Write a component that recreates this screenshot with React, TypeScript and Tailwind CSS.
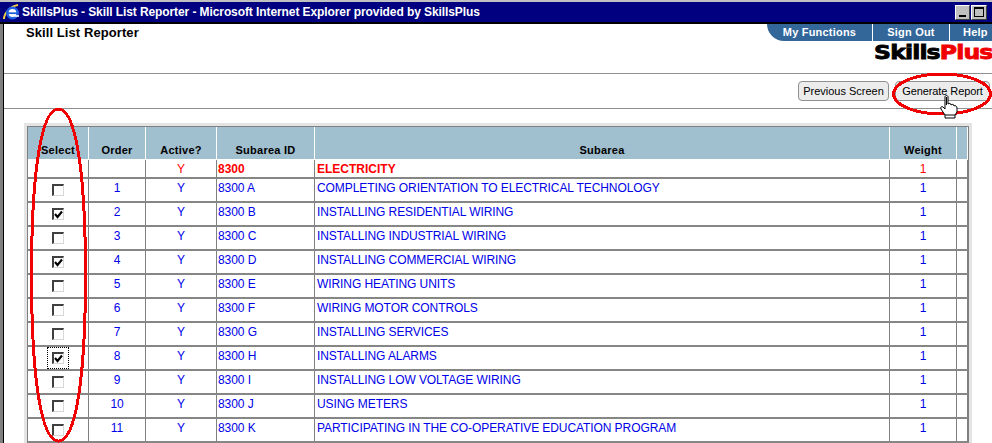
import { Fragment } from 'react';

const rows = [
  { order: '1', id: '8300 A', name: 'COMPLETING ORIENTATION TO ELECTRICAL TECHNOLOGY', checked: false },
  { order: '2', id: '8300 B', name: 'INSTALLING RESIDENTIAL WIRING', checked: true },
  { order: '3', id: '8300 C', name: 'INSTALLING INDUSTRIAL WIRING', checked: false },
  { order: '4', id: '8300 D', name: 'INSTALLING COMMERCIAL WIRING', checked: true },
  { order: '5', id: '8300 E', name: 'WIRING HEATING UNITS', checked: false },
  { order: '6', id: '8300 F', name: 'WIRING MOTOR CONTROLS', checked: false },
  { order: '7', id: '8300 G', name: 'INSTALLING SERVICES', checked: false },
  { order: '8', id: '8300 H', name: 'INSTALLING ALARMS', checked: true, focused: true },
  { order: '9', id: '8300 I', name: 'INSTALLING LOW VOLTAGE WIRING', checked: false },
  { order: '10', id: '8300 J', name: 'USING METERS', checked: false },
  { order: '11', id: '8300 K', name: 'PARTICIPATING IN THE CO-OPERATIVE EDUCATION PROGRAM', checked: false },
];

const gridCols = 'grid grid-cols-[61px_57px_71px_98px_575px_67px_11px]';
const cell = 'border-r border-[#808080] text-center';

function Checkbox({ checked, focused }: { checked: boolean; focused?: boolean }) {
  return (
    <div className={`flex h-[22px] w-[22px] items-center justify-center ${focused ? 'border border-dotted border-black' : ''}`}>
      <div className="h-[12px] w-[12px] border-t-2 border-l-2 border-r border-b border-t-[#404040] border-l-[#404040] border-r-[#d8d8d8] border-b-[#d8d8d8] bg-white">
        {checked && (
          <svg width="9" height="9" viewBox="0 0 9 9" className="block">
            <path d="M1 4 L3.5 7 L8 1.5" fill="none" stroke="#000" strokeWidth="2.1" />
          </svg>
        )}
      </div>
    </div>
  );
}

function IeIcon() {
  return (
    <svg width="17" height="17" viewBox="0 0 17 17" className="shrink-0">
      <path d="M1 15 C1 9 8 2 15 1" fill="none" stroke="#f0d040" strokeWidth="2" />
      <circle cx="9.5" cy="9" r="5.2" fill="#fff" stroke="#2060e0" strokeWidth="2.6" />
      <path d="M5 9.2 H15" stroke="#2060e0" strokeWidth="1.8" />
      <path d="M11.5 12 H16" stroke="#fff" strokeWidth="1.6" />
    </svg>
  );
}

function TitleBar() {
  return (
    <div className="flex h-[24px] flex-col bg-[#c0c0c0] pt-[2px]">
      <div className="flex h-[20px] items-center bg-[#000080] pl-[3px] pr-[3px]">
        <IeIcon />
        <span className="ml-[2px] text-[12px] font-bold tracking-[-0.09px] text-white">
          SkillsPlus - Skill List Reporter - Microsoft Internet Explorer provided by SkillsPlus
        </span>
        <div className="ml-auto flex gap-[1px] pr-[2px]">
          <div className="flex h-[15px] w-[15px] items-end justify-center border border-t-white border-l-white border-r-[#404040] border-b-[#404040] bg-[#c0c0c0] pb-[2px]">
            <div className="h-[2px] w-[7px] bg-black" />
          </div>
          <div className="flex h-[15px] w-[16px] items-center justify-center border border-t-white border-l-white border-r-[#404040] border-b-[#404040] bg-[#c0c0c0]">
            <div className="h-[10px] w-[10px] border border-t-2 border-black" />
          </div>
        </div>
      </div>
      <div className="h-[2px] bg-black" />
    </div>
  );
}

function TopNav() {
  return (
    <div className="flex flex-col items-end">
      <div className="flex h-[17px] items-center rounded-bl-[18px] bg-[#336699] text-[11px] font-bold tracking-[0.2px] text-white">
        <div className="w-[105px] text-center">My Functions</div>
        <div className="w-[77px] border-l border-white text-center">Sign Out</div>
        <div className="w-[43px] border-l border-white pl-[13px]">Help</div>
      </div>
      <div className="mt-[1px] origin-right scale-x-[1.24] font-['DejaVu_Sans',sans-serif] text-[19px] leading-[20px] font-bold tracking-[-0.7px] whitespace-nowrap [-webkit-text-stroke:0.8px]">
        <span className="text-black">Skills</span>
        <span className="text-[#f00000]">Plus</span>
      </div>
    </div>
  );
}

function ReportTable() {
  return (
    <div className="ml-[20px] mt-[14px] w-[948px] shrink-0 border-[3px] border-[#e4e4e4] bg-[#808080] pl-[1px] pr-[1px] pt-[1px]">
      <div className={`${gridCols} h-[32px] bg-[#a0bfcf] text-[11px] font-bold tracking-[0.25px] text-black`}>
        {['Select', 'Order', 'Active?', 'Subarea ID', 'Subarea', 'Weight', ''].map((label) => (
          <div key={label} className="border-r border-b border-white pt-[15px] text-center">
            {label}
          </div>
        ))}
      </div>
      <div className={`${gridCols} h-[20px] border-b-2 border-[#868686] bg-white pt-[1px] text-[12px] text-[#ff0000]`}>
        <div className={cell} />
        <div className={cell} />
        <div className={cell}>Y</div>
        <div className="border-r border-[#808080] pl-[1px] font-bold">8300</div>
        <div className="border-r border-[#808080] pl-[2px] font-bold">ELECTRICITY</div>
        <div className={cell}>1</div>
        <div className={cell} />
      </div>
      {rows.map((row) => (
        <Fragment key={row.id}>
          <div className={`${gridCols} h-[24px] border-b-2 border-[#868686] bg-white text-[12px] tracking-[-0.08px] text-[#0000e8]`}>
            <div className="flex items-center justify-center border-r border-[#808080]">
              <Checkbox checked={row.checked} focused={row.focused} />
            </div>
            <div className={cell}>{row.order}</div>
            <div className={cell}>Y</div>
            <div className="border-r border-[#808080] pl-[1px]">{row.id}</div>
            <div className="border-r border-[#808080] pl-[2px]">{row.name}</div>
            <div className={cell}>1</div>
            <div className={cell} />
          </div>
        </Fragment>
      ))}
    </div>
  );
}

function Annotations() {
  return (
    <svg width="992" height="443" viewBox="0 0 992 443" className="pointer-events-none absolute left-0 top-0">
      <path
        d="M58.5 109 C75.5 109 85.5 170 85.5 275 C85.5 380 75.5 441 58.5 441 C41.5 441 31.5 380 31.5 275 C31.5 170 41.5 109 58.5 109 Z"
        fill="none"
        stroke="#f00000"
        strokeWidth="3"
        shapeRendering="crispEdges"
      />
      <ellipse cx="942" cy="94" rx="48.5" ry="20" fill="none" stroke="#f00000" strokeWidth="3" shapeRendering="crispEdges" />
      <path
        d="M945 97 C945 95 948 95 948 97 L948 104 C949 103 951 103 951 105 C952 104 954 104 954 106 C955 105 957 106 957 108 L957 112 L955 115 L955 118 L945 118 L945 115 L941 109 C940 107 942 106 943 107 L945 109 Z"
        fill="#fff"
        stroke="#000"
        strokeWidth="1"
      />
      <path d="M945 115 H955 M946.5 97 V105" stroke="#000" strokeWidth="1" />
    </svg>
  );
}

export default function App() {
  return (
    <div className="relative h-[443px] w-[992px] overflow-hidden bg-white font-['Liberation_Sans',Arial,sans-serif]">
      <TitleBar />
      <div className="flex h-[419px] border-l-[3px] border-[#808080]">
        <div className="w-[1px] bg-black" />
        <div className="flex min-w-0 flex-1 flex-col">
          <div className="flex h-[50px] shrink-0 justify-between border-b border-[#909090]">
            <div className="pl-[22px] text-[13px] leading-[18px] font-bold tracking-[0.08px] text-black">Skill List Reporter</div>
            <TopNav />
          </div>
          <div className="flex h-[35px] shrink-0 items-center justify-end gap-[6px] border-b border-[#909090] pr-[2px] text-[11px] text-black">
            <div className="flex h-[20px] w-[91px] items-center justify-center rounded-[4px] border border-[#909090] bg-[#ececec]">Previous Screen</div>
            <div className="flex h-[20px] w-[95px] items-center justify-center rounded-[4px] border border-[#909090] bg-[#ececec] tracking-[-0.1px]">Generate Report</div>
          </div>
          <ReportTable />
        </div>
      </div>
      <Annotations />
    </div>
  );
}
